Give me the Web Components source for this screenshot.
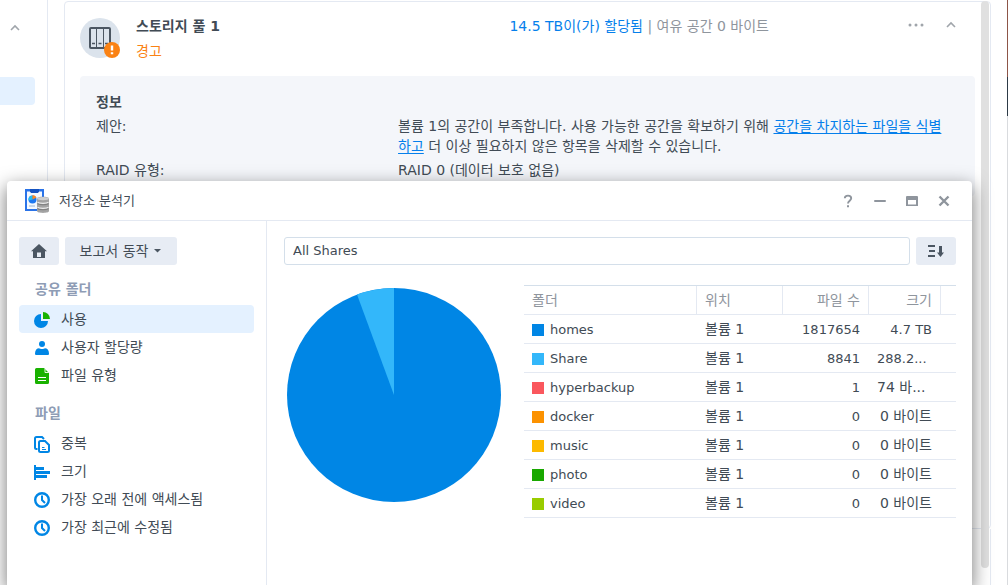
<!DOCTYPE html>
<html lang="ko">
<head>
<meta charset="utf-8">
<meta name="viewport" content="width=device-width, initial-scale=1">
<title>저장소 분석기</title>
<style>
  html, body {
    margin: 0;
    height: 100%;
    overflow: hidden;
  }
  body {
    --text: #414b55;
    --muted: #8f959d;
    --heading: #8e9cb5;
    --blue: #057feb;
    --orange: #fa8214;
    --line: #e4e9f2;
    --line-dark: #d4dfea;
    --selected: #e4f1ff;
    --button: #e7ecf4;
    --panel: #f4f6fa;
    --size-latin: 13px;
    --size-hangul: 14px;
    background: #fff;
    color: var(--text);
    font: var(--size-hangul)/20px "DejaVu Sans", "Noto Sans CJK KR", sans-serif;
  }
</style>
</head>
<body>

<storage-manager>
  <pool-card>
    <span slot="name">스토리지 풀 1</span>
    <span slot="status">경고</span>
    <span slot="allocated">14.5 TB이(가) 할당됨</span>
    <span slot="free">여유 공간 0 바이트</span>
    <info-panel heading="정보">
      <info-row label="제안:">볼륨 1의 공간이 부족합니다. 사용 가능한 공간을 확보하기 위해 <a href="#">공간을 차지하는 파일을 식별하고</a> 더 이상 필요하지 않은 항목을 삭제할 수 있습니다.</info-row>
      <info-row label="RAID 유형:">RAID 0 (데이터 보호 없음)</info-row>
    </info-panel>
  </pool-card>
</storage-manager>

<tool-window heading="저장소 분석기">
  <report-actions slot="side"></report-actions>
  <nav-section slot="side" heading="공유 폴더">
    <nav-item icon="usage" selected>사용</nav-item>
    <nav-item icon="user">사용자 할당량</nav-item>
    <nav-item icon="file">파일 유형</nav-item>
  </nav-section>
  <nav-section slot="side" heading="파일">
    <nav-item icon="copies">중복</nav-item>
    <nav-item icon="bars">크기</nav-item>
    <nav-item icon="clock">가장 오래 전에 액세스됨</nav-item>
    <nav-item icon="clock">가장 최근에 수정됨</nav-item>
  </nav-section>
  <share-picker value="All Shares"></share-picker>
  <usage-report></usage-report>
</tool-window>

<script>
const ICONS = {
  pool: [40, 40, `
    <circle cx="20" cy="20" r="20" fill="#dbe3ec"/>
    <rect x="10" y="10" width="20" height="20" rx="1" fill="none" stroke="#4b5662" stroke-width="2"/>
    <path d="M16.5 10v20M23.5 10v20" stroke="#4b5662"/>
    <path d="M12 25.5h3M18.500 25.500h3M25 25.500h3" stroke="#4b5662" stroke-width="1.500"/>
    <circle cx="32" cy="32" r="8" fill="#fa8214"/>
    <path d="M32 27.500v5M32 34.200v2" stroke="#fff" stroke-width="2.400"/>`],
  app: [24, 24, `
    <path d="M0 0h19v22H0z" fill="#2a73e8"/>
    <path d="M2 2.500h15V20H2z" fill="#f4f9ff"/>
    <path d="M5 0h9v2.500l-1 1.500H6L5 2.500z" fill="#1553c0"/>
    <circle cx="7.500" cy="10.500" r="4" fill="#1e78f0"/>
    <path d="M7.500 10.500v-4a4 4 0 0 0-3.900 5z" fill="#22bff2"/>
    <path d="M7.500 10.500v-4.500a4.500 4.500 0 0 1 4 2.500z" fill="#ff8a1c"/>
    <path d="M4 17h6" stroke="#b9cbe4" stroke-width="1.500"/>
    <path d="M12 9.500C12 7.300 24 7.300 24 9.500v12.500C24 24.500 12 24.500 12 22z" fill="#a3a3a3"/>
    <ellipse cx="18" cy="9.600" rx="6" ry="1.700" fill="#cfcfcf"/>
    <path d="M12.500 13.300c2 1.300 9 1.300 11 0M12.500 18.300c2 1.300 9 1.300 11 0" fill="none" stroke="#ececec" stroke-width="1.300"/>
    <path d="M12.500 14.800c2 1.300 9 1.300 11 0M12.500 19.800c2 1.300 9 1.300 11 0" fill="none" stroke="#7d7d7d" stroke-width="1"/>`],
  more: [16, 4, `
    <g fill="#a0a5ab"><circle cx="2" cy="2" r="1.500"/><circle cx="8" cy="2" r="1.500"/><circle cx="14" cy="2" r="1.500"/></g>`],
  up: [10, 8, `<path d="M1 6l4-4 4 4" fill="none" stroke="#a0a5ab" stroke-width="1.600"/>`],
  help: [16, 16, `
    <path d="M4.800 5.200C4.800 3.300 6.200 2.600 8 2.600s3.200 1 3.200 2.700c0 2.300-3.200 2.500-3.200 5.200" fill="none" stroke="#8f959d" stroke-width="1.900"/>
    <path d="M7 12.200h2v2H7z" fill="#8f959d"/>`],
  minimize: [16, 16, `<path d="M3 8h10" stroke="#8f959d" stroke-width="2" stroke-linecap="round"/>`],
  maximize: [16, 16, `
    <path d="M3 3h10a1 1 0 0 1 1 1v9H2V4a1 1 0 0 1 1-1zM4 7v4.500h8V7z" fill="#8f959d" fill-rule="evenodd"/>`],
  close: [16, 16, `<path d="M3.500 3.500l9 9M12.500 3.500l-9 9" stroke="#8f959d" stroke-width="2.400"/>`],
  home: [16, 16, `
    <path d="M8 1l8 7.200h-2V15H2V8.200H0zM6 9.500V14h4V9.500z" fill="#4b5662" fill-rule="evenodd"/>`],
  caret: [8, 4, `<path d="M0 0h7L3.500 3.500z" fill="#4b5662"/>`],
  sort: [16, 14, `
    <path d="M0 2h7M1 7h6M0 12h7" stroke="#4b5662" stroke-width="2"/>
    <path d="M11 2h3v6.500h2l-3.500 4.500L9 8.500h2z" fill="#4b5662"/>`],
  usage: [16, 16, `
    <path d="M7 2v7h7a7 7 0 1 1-7-7z" fill="#0086e5"/>
    <path d="M9 0a7 7 0 0 1 7 7H9z" fill="#19b200"/>`],
  user: [16, 16, `
    <circle cx="8" cy="4" r="3" fill="#0086e5"/>
    <path d="M1 13.500C1 10 3 8.200 5 8.200c1 1 5 1 6 0 2 0 4 1.800 4 5.300 0 1-.5 1.500-1.500 1.500h-11C1.500 15 1 14.500 1 13.500z" fill="#0086e5"/>`],
  file: [16, 16, `
    <path d="M2.500 0H10l5 5v9.500a1.500 1.500 0 0 1-1.500 1.500h-11A1.500 1.500 0 0 1 1 14.500v-13A1.500 1.500 0 0 1 2.500 0z" fill="#19b200"/>
    <path d="M11 0.800V4.500h3.800" fill="none" stroke="#e6f8e2"/>
    <path d="M4 9.500h8M4 12.500h8" stroke="#fff"/>`],
  copies: [16, 17, `
    <path d="M3.500 13H2.500A1.500 1.500 0 0 1 1 11.500v-9A1.500 1.500 0 0 1 2.500 1H8l2 2" fill="none" stroke="#0086e5" stroke-width="2"/>
    <path d="M6.500 5H11l4 4v5.500a1.500 1.500 0 0 1-1.500 1.500h-7A1.500 1.500 0 0 1 5 14.500v-8A1.500 1.500 0 0 1 6.500 5z" fill="#fff" stroke="#0086e5" stroke-width="2"/>
    <path d="M8 11.500h2.500M8 13.500h4" stroke="#0086e5"/>`],
  bars: [16, 16, `
    <path d="M1 1v15" stroke="#0086e5" stroke-width="2"/>
    <path d="M0 4.500h10M0 8.500h16M0 12.500h13" stroke="#0086e5" stroke-width="3"/>`],
  clock: [16, 16, `
    <circle cx="8" cy="8" r="6.800" fill="#fff" stroke="#0086e5" stroke-width="2.400"/>
    <path d="M8 3.500V8l3 3" fill="none" stroke="#0086e5" stroke-width="2"/>`]
};

function attach(element, markup) {
  const template = document.createElement('template');
  template.innerHTML = markup;
  element.attachShadow({mode: 'open'}).appendChild(template.content.cloneNode(true));
}

/**
 * SvgIcon
 */
customElements.define('svg-icon', class SvgIcon extends HTMLElement {
constructor() {
  super();
  this.attachShadow({mode: 'open'});
}

static get observedAttributes() {
  return ['name'];
}

attributeChangedCallback(name, oldValue, newValue) {
  const [width, height, body] = ICONS[newValue];

  this.shadowRoot.innerHTML = `
<style>
  :host {
    display: block;
    flex: none;
  }
  svg {
    display: block;
  }
</style>
<svg width="${width}" height="${height}" viewBox="0 0 ${width} ${height}" aria-hidden="true">${body}</svg>
`;
}
});

/**
 * StorageManager: the page behind the window
 */
customElements.define('storage-manager', class StorageManager extends HTMLElement {
constructor() {
  super();

  attach(this, `
<style>
  :host {
    display: flex;
    gap: 16px;
    height: 100vh;
  }
  nav {
    box-sizing: border-box;
    width: 48px;
    flex: none;
    padding-top: 24px;
    border-right: 1px solid var(--line);
  }
  button {
    display: block;
    border: 0;
    padding: 0;
    background: none;
  }
  .toggle {
    margin: 0 0 45px 10px;
  }
  .current {
    width: 35px;
    height: 28px;
    border-radius: 0 4px 4px 0;
    background: var(--selected);
  }
  main {
    display: flex;
    flex-direction: column;
    flex: 1;
    min-width: 0;
    padding-top: 1px;
    position: relative;
  }
  .next {
    flex: 1;
    border: 1px solid var(--line);
    border-width: 0 1px;
  }
  .scrollbar {
    position: absolute;
    top: 1px;
    right: 2px;
    bottom: 17px;
    width: 8px;
    border-radius: 4px;
    background: #e0e0e0;
  }
  .edge {
    flex: none;
    width: 1px;
    background: linear-gradient(#8d5548 77px, #2d3a46 77px 116px, #d9dbde 116px);
  }
</style>
<nav>
  <button class="toggle" aria-label="접기"><svg-icon name="up"></svg-icon></button>
  <button class="current" aria-label="저장소"></button>
</nav>
<main>
  <slot></slot>
  <div class="next"></div>
  <div class="scrollbar"></div>
</main>
<div class="edge"></div>
`);
}
});

/**
 * PoolCard
 */
customElements.define('pool-card', class PoolCard extends HTMLElement {
constructor() {
  super();

  attach(this, `
<style>
  :host {
    display: block;
    box-sizing: border-box;
    height: 528px;
    border: 1px solid var(--line);
    border-radius: 4px;
    padding: 14px 15px;
  }
  header {
    display: grid;
    grid-template-columns: 40px 1fr auto 190px;
    column-gap: 16px;
    margin-bottom: 15px;
  }
  svg-icon {
    display: block;
  }
  .pool {
    padding-top: 2px;
  }
  .name {
    font-weight: bold;
    margin-bottom: 5px;
  }
  .status {
    color: var(--orange);
  }
  .allocated {
    color: var(--blue);
  }
  .space {
    color: var(--muted);
  }
  .actions {
    display: flex;
    justify-content: flex-end;
    align-items: center;
    gap: 22px;
    height: 18px;
    padding-right: 19px;
  }
  button {
    border: 0;
    padding: 0;
    background: none;
  }
</style>
<header>
  <svg-icon class="pool" name="pool"></svg-icon>
  <div>
    <div class="name"><slot name="name"></slot></div>
    <div class="status"><slot name="status"></slot></div>
  </div>
  <div class="space"><span class="allocated"><slot name="allocated"></slot></span> | <slot name="free"></slot></div>
  <div class="actions">
    <button aria-label="더 보기"><svg-icon name="more"></svg-icon></button>
    <button aria-label="접기"><svg-icon name="up"></svg-icon></button>
  </div>
</header>
<slot></slot>
`);
}
});

/**
 * InfoPanel
 */
customElements.define('info-panel', class InfoPanel extends HTMLElement {
constructor() {
  super();

  attach(this, `
<style>
  :host {
    display: flex;
    flex-direction: column;
    gap: 4px;
    padding: 16px;
    border-radius: 4px;
    background: var(--panel);
  }
  h2 {
    margin: 0;
    font-size: inherit;
  }
</style>
<h2>${this.getAttribute('heading')}</h2>
<slot></slot>
`);
}
});

/**
 * InfoRow
 */
customElements.define('info-row', class InfoRow extends HTMLElement {
constructor() {
  super();

  attach(this, `
<style>
  :host {
    display: grid;
    grid-template-columns: 35fr 65fr;
  }
  .value {
    padding-right: 8px;
  }
  ::slotted(a) {
    color: var(--blue);
    text-underline-offset: 2px;
  }
</style>
<div>${this.getAttribute('label')}</div>
<div class="value"><slot></slot></div>
`);
}
});

/**
 * ToolWindow
 */
customElements.define('tool-window', class ToolWindow extends HTMLElement {
constructor() {
  super();

  attach(this, `
<style>
  :host {
    position: absolute;
    top: 181px;
    left: 7px;
    right: 36px;
    bottom: 0;
    display: flex;
    flex-direction: column;
    border-radius: 4px 4px 0 0;
    background: #fff;
    box-shadow: 0 6px 18px 1px rgba(0, 0, 0, 0.5);
  }
  header {
    display: flex;
    align-items: center;
    height: 39px;
    padding: 0 12px 0 18px;
    border-bottom: 1px solid var(--line);
  }
  h1 {
    flex: 1;
    margin: 0 0 0 10px;
    font-size: var(--size-latin);
    font-weight: normal;
  }
  header button {
    display: flex;
    justify-content: center;
    width: 32px;
    border: 0;
    padding: 0;
    background: none;
  }
  .body {
    display: flex;
    flex: 1;
    min-height: 0;
  }
  aside {
    box-sizing: border-box;
    flex: none;
    width: 260px;
    padding: 16px 12px;
    border-right: 1px solid var(--line);
  }
  section {
    flex: 1;
    min-width: 0;
    padding: 16px 16px 0 17px;
  }
</style>
<header>
  <svg-icon name="app"></svg-icon>
  <h1>${this.getAttribute('heading')}</h1>
  <button aria-label="도움말"><svg-icon name="help"></svg-icon></button>
  <button aria-label="최소화"><svg-icon name="minimize"></svg-icon></button>
  <button aria-label="최대화"><svg-icon name="maximize"></svg-icon></button>
  <button aria-label="닫기"><svg-icon name="close"></svg-icon></button>
</header>
<div class="body">
  <aside><slot name="side"></slot></aside>
  <section><slot></slot></section>
</div>
`);
}
});

/**
 * ReportActions
 */
customElements.define('report-actions', class ReportActions extends HTMLElement {
constructor() {
  super();

  attach(this, `
<style>
  :host {
    display: flex;
    gap: 6px;
  }
  button {
    display: flex;
    align-items: center;
    justify-content: center;
    gap: 6px;
    width: 40px;
    height: 28px;
    border: 0;
    border-radius: 3px;
    padding: 0;
    background: var(--button);
    color: inherit;
    font: inherit;
  }
  .menu {
    width: 112px;
  }
</style>
<button aria-label="홈"><svg-icon name="home"></svg-icon></button>
<button class="menu">보고서 동작<svg-icon name="caret"></svg-icon></button>
`);
}
});

/**
 * NavSection
 */
customElements.define('nav-section', class NavSection extends HTMLElement {
constructor() {
  super();

  attach(this, `
<style>
  :host {
    display: block;
  }
  h2 {
    margin: 0;
    padding: 12px 16px 4px;
    color: var(--heading);
    font-size: inherit;
    font-weight: bold;
    line-height: 24px;
  }
</style>
<h2>${this.getAttribute('heading')}</h2>
<slot></slot>
`);
}
});

/**
 * NavItem
 */
customElements.define('nav-item', class NavItem extends HTMLElement {
constructor() {
  super();

  attach(this, `
<style>
  :host {
    display: block;
  }
  button {
    display: flex;
    align-items: center;
    gap: 11px;
    width: 100%;
    height: 28px;
    border: 0;
    border-radius: 4px;
    padding: 0 15px;
    background: none;
    color: inherit;
    font: inherit;
  }
  svg-icon {
    padding-top: 2px;
  }
  :host([selected]) button {
    background: var(--selected);
  }
</style>
<button><svg-icon name="${this.getAttribute('icon')}"></svg-icon><slot></slot></button>
`);
}
});

/**
 * SharePicker
 */
customElements.define('share-picker', class SharePicker extends HTMLElement {
constructor() {
  super();

  attach(this, `
<style>
  :host {
    display: flex;
    gap: 6px;
    margin-bottom: 20px;
  }
  input {
    box-sizing: border-box;
    flex: 1;
    min-width: 0;
    height: 28px;
    border: 1px solid var(--line-dark);
    border-radius: 3px;
    padding: 0 8px 2px;
    background: #fff;
    color: inherit;
    font: inherit;
    font-size: var(--size-latin);
  }
  button {
    display: flex;
    align-items: center;
    justify-content: center;
    width: 40px;
    height: 28px;
    border: 0;
    border-radius: 3px;
    padding: 0;
    background: var(--button);
  }
</style>
<input type="text" aria-label="공유 폴더" value="${this.getAttribute('value')}">
<button aria-label="정렬"><svg-icon name="sort"></svg-icon></button>
`);
}
});

/**
 * UsageReport: pie chart and the table of folders
 */
customElements.define('usage-report', class UsageReport extends HTMLElement {
constructor() {
  super();

  const folders = [
    ['#0086e5', 'homes', '1817654', '4.7 TB'],
    ['#33b7fa', 'Share', '8841', '288.2...'],
    ['#fa575d', 'hyperbackup', '1', '74 바...'],
    ['#fc9200', 'docker', '0', '0 바이트'],
    ['#fdba00', 'music', '0', '0 바이트'],
    ['#19a800', 'photo', '0', '0 바이트'],
    ['#99cc00', 'video', '0', '0 바이트']
  ];
  const rows = folders.map(([color, name, files, size]) => `
    <tr>
      <td class="latin"><span class="name"><i style="background: ${color}"></i>${name}</span></td>
      <td>볼륨 1</td>
      <td class="latin number">${files}</td>
      <td class="${/[가-힣]/.test(size) ? '' : 'latin'} ${size.endsWith('...') ? '' : 'number'}">${size}</td>
      <td></td>
    </tr>`).join('');

  attach(this, `
<style>
  :host {
    display: flex;
    align-items: flex-start;
    gap: 23px;
  }
  .pie {
    flex: none;
    padding: 3px 0 0 3px;
  }
  table {
    flex: 1;
    width: 100%;
    min-width: 0;
    border-collapse: separate;
    border-spacing: 0;
    border-top: 1px solid var(--line-dark);
    table-layout: fixed;
  }
  th, td {
    box-sizing: border-box;
    height: 29px;
    border-bottom: 1px solid var(--line);
    padding: 0 8px;
    overflow: hidden;
    line-height: 20px;
    text-align: left;
    white-space: nowrap;
  }
  th {
    border-right: 1px solid var(--line);
    color: var(--muted);
    font-weight: normal;
  }
  th:last-child {
    border-right: 0;
    padding: 0;
  }
  td:last-child {
    padding: 0;
  }
  .latin {
    padding-top: 2px;
    font-size: var(--size-latin);
  }
  .number {
    padding-right: 9px;
    text-align: right;
  }
  th.number {
    padding-right: 8px;
  }
  .name {
    display: flex;
    align-items: center;
    gap: 6px;
  }
  i {
    width: 12px;
    height: 12px;
  }
</style>
<svg class="pie" width="214" height="214" viewBox="0 0 214 214" role="img" aria-label="homes, Share">
  <circle cx="107" cy="107" r="107" fill="#0086e5"/>
  <path d="M107 107L70 6.600A107 107 0 0 1 107 0z" fill="#33b7fa"/>
</svg>
<table>
  <colgroup>
    <col><col style="width: 86px"><col style="width: 86px"><col style="width: 72px"><col style="width: 15px">
  </colgroup>
  <thead>
    <tr><th>폴더</th><th>위치</th><th class="number">파일 수</th><th class="number">크기</th><th></th></tr>
  </thead>
  <tbody>${rows}
  </tbody>
</table>
`);
}
});
</script>
</body>
</html>
